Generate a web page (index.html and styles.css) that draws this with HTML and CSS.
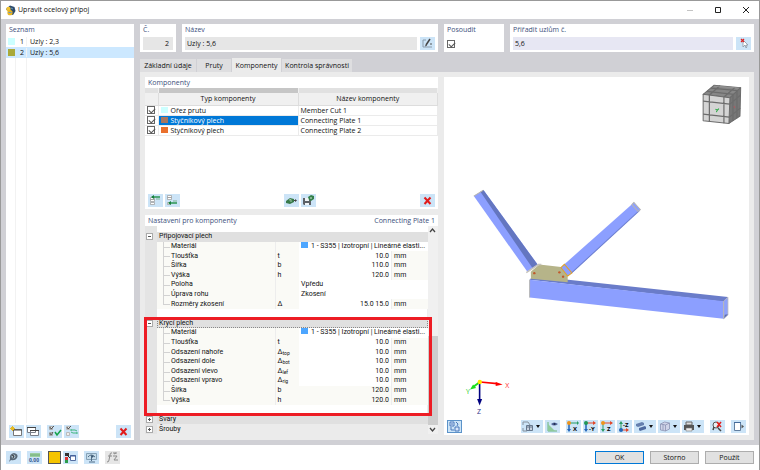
FILE: index.html
```html
<!DOCTYPE html>
<html lang="cs">
<head>
  <meta charset="UTF-8">
  <title>Upravit ocelový přípoj</title>
  <link rel="stylesheet" href="styles.css">
</head>
<body>
<div class="window">
  <header class="titlebar">
    <svg class="app-icon" width="11" height="11" viewBox="0 0 11 11">
      <path d="M1 4 5 .5 9.500 2 10.500 6 8 10 5 9z" fill="#2c4b6b"/>
      <circle cx="3.500" cy="4" r="2.200" fill="#f2c230"/>
      <circle cx="5" cy="7.700" r="2.600" fill="#e9b520"/>
      <path d="M3.500 7.500h3M6 3l2 1" stroke="#6c99be" fill="none"/>
    </svg>
    <h1>Upravit ocelový přípoj</h1>
    <div class="caption-buttons">
      <button aria-label="Minimalizovat" disabled><svg width="8" height="8" viewBox="0 0 8 8"><path d="M1 4.500h6" stroke="#c4c4c4"/></svg></button>
      <button aria-label="Maximalizovat"><svg width="8" height="8" viewBox="0 0 8 8"><path d="M1.500 1.500h5v5h-5z" stroke="#222" fill="none"/></svg></button>
      <button aria-label="Zavřít"><svg width="8" height="8" viewBox="0 0 8 8"><path d="m1 1 6 6m0-6-6 6" stroke="#222"/></svg></button>
    </div>
  </header>

  <main class="content">
    <aside class="panel sidebar">
      <h2>Seznam</h2>
      <ul class="list">
        <li><i class="swatch cyan"></i><span class="num">1</span><span>Uzly : 2,3</span></li>
        <li class="selected"><i class="swatch olive"></i><span class="num">2</span><span>Uzly : 5,6</span></li>
        <li class="rest"><span class="num"></span></li>
      </ul>
      <div class="toolbar">
        <button class="tool" aria-label="Nový"><svg viewBox="0 0 15 13"><path d="M4.500 4.500h8v6h-8z" fill="#fff" stroke="#777"/><path d="M4 5h9" stroke="#444"/><path d="M3.500 1v5M1 3.500h5M2 2l3 3m0-3L2 5" stroke="#e6ba25"/></svg></button>
        <button class="tool" aria-label="Kopírovat"><svg viewBox="0 0 15 13"><path d="M1.500 2.500h8v5h-8zM4.500 5.500h8v5h-8z" fill="#fff" stroke="#787e88"/><path d="M1 2.500h9M4 5.500h9" stroke="#444"/></svg></button>
        <span class="gap"></span>
        <button class="tool" aria-label="Vybrat vše"><svg viewBox="0 0 15 13"><path d="M2.500 1.500h3v3h-3zM2.500 7.500h3v3h-3z" fill="#eee" stroke="#aaa"/><path d="m3 2 1 2 3-3M3 8l1 2 2-3" stroke="#555" fill="none"/><path d="m8 7 2 3 4-5" stroke="#14a34c" stroke-width="1.500" fill="none"/></svg></button>
        <button class="tool" aria-label="Obrátit výběr"><svg viewBox="0 0 15 13"><path d="M2.500 1.500h3v3h-3zM2.500 7.500h3v3h-3z" fill="#eee" stroke="#bbb"/><path d="m3 2 1 2 3-3" stroke="#555" fill="none"/><path d="M7 5h4l2 1M7 4v2M13 8H9L7 7m6 0v2" stroke="#42b783" fill="none"/></svg></button>
        <button class="tool push" aria-label="Smazat"><svg viewBox="0 0 15 13"><path d="m4.500 3.500 6 6.500m0-6.500-6 6.500" stroke="#e11b1b" stroke-width="2"/></svg></button>
      </div>
    </aside>

    <div class="main">
      <div class="fields">
        <div class="fields-left">
          <div class="panel field number-field">
            <label for="number">Č.</label>
            <input id="number" class="text right" value="2" readonly>
          </div>
          <div class="panel field grow">
            <label for="name">Název</label>
            <div class="input-row">
              <input id="name" class="text" value="Uzly : 5,6" readonly>
              <button class="tool" aria-label="Upravit název"><svg viewBox="0 0 15 13"><path d="M6 3H3v7h9" stroke="#8a9bab" fill="none"/><path d="m6 8 4-6" stroke="#444" stroke-width="1.500"/><path d="m5 9 2-1M10 7h2" stroke="#555"/></svg></button>
            </div>
          </div>
        </div>
        <div class="panel field check-field">
          <label for="design">Posoudit</label>
          <div class="input-row"><input id="design" class="check" type="checkbox" checked></div>
        </div>
        <div class="panel field grow">
          <label for="nodes">Přiřadit uzlům č.</label>
          <div class="input-row">
            <input id="nodes" class="text lilac" value="5,6">
            <button class="tool" aria-label="Vybrat uzly"><svg viewBox="0 0 15 13"><path d="M7 3v7l2-2 1 3 1-1-1-2h2z" fill="#fff" stroke="#8b98a3" stroke-width=".8"/><path d="m5 2 3 3m0-3L5 5" stroke="#d22" stroke-width="1.200"/></svg></button>
          </div>
        </div>
      </div>

      <nav class="tabs" role="tablist">
        <button role="tab" class="tab tab-basic">Základní údaje</button>
        <button role="tab" class="tab tab-members">Pruty</button>
        <button role="tab" class="tab tab-components active" aria-selected="true">Komponenty</button>
        <button role="tab" class="tab tab-check">Kontrola správnosti</button>
      </nav>

      <div class="page">
        <div class="left">
          <section class="panel components">
            <h2>Komponenty</h2>
            <table class="component-table">
              <colgroup><col class="c-check"><col class="c-type"><col></colgroup>
              <thead>
                <tr class="strip"><td></td><td class="dark"></td><td></td></tr>
                <tr><th></th><th>Typ komponenty</th><th>Název komponenty</th></tr>
              </thead>
              <tbody>
                <tr><td><input class="check" type="checkbox" aria-label="Ořez prutu" checked></td><td><i class="swatch cyan"></i>Ořez prutu</td><td>Member Cut 1</td></tr>
                <tr class="active"><td><input class="check" type="checkbox" aria-label="Styčníkový plech 1" checked></td><td><i class="swatch brown"></i>Styčníkový plech</td><td>Connecting Plate 1</td></tr>
                <tr><td><input class="check" type="checkbox" aria-label="Styčníkový plech 2" checked></td><td><i class="swatch orange"></i>Styčníkový plech</td><td>Connecting Plate 2</td></tr>
              </tbody>
            </table>
            <div class="toolbar">
              <button class="tool" aria-label="Vložit před"><svg viewBox="0 0 15 13"><path d="M2.500 3.500h4v2h-4zM2.500 5.500h4v2h-4zM2.500 8.500h4v2h-4z" fill="#fff" stroke="#999" stroke-width=".7"/><path d="M4 3h8" stroke="#299451" stroke-width="1.500"/><path d="m3 3 3-2v4z" fill="#16813d"/><path d="M8 5h4" stroke="#7db597"/></svg></button>
              <button class="tool" aria-label="Vložit za"><svg viewBox="0 0 15 13"><path d="M2.500 1.500h4v2h-4zM2.500 3.500h4v2h-4zM2.500 8.500h3v2h-3z" fill="#fff" stroke="#999" stroke-width=".7"/><path d="M4 9h8" stroke="#299451" stroke-width="1.500"/><path d="m3 9 3-2v4z" fill="#16813d"/><path d="M8 7h4" stroke="#7db597"/></svg></button>
              <button class="tool push-mid" aria-label="Načíst šablonu"><svg viewBox="0 0 15 13"><path d="m2 7 4-3 4 1v3l-4 2-4-1z" fill="#387a4a"/><path d="m5 6 2-.5V8" stroke="#a7c9ae" fill="none"/><path d="M10 6.500h2" stroke="#444"/><path d="m11 5 2 1.500L11 8z" fill="#444"/></svg></button>
              <button class="tool" aria-label="Uložit šablonu"><svg viewBox="0 0 15 13"><path d="M2 4h8v7H3L2 10z" fill="#5c6066"/><path d="M4 4h4v3H4zM4 9h4v2H4z" fill="#eef2f5"/><path d="m7 3 3-2 3 1v3l-3 2-2-1z" fill="#34804a"/><path d="M9 4h2" stroke="#d5e7d7"/></svg></button>
              <button class="tool push" aria-label="Smazat komponentu"><svg viewBox="0 0 15 13"><path d="m4.500 3.500 6 6.500m0-6.500-6 6.500" stroke="#e11b1b" stroke-width="2"/></svg></button>
            </div>
          </section>

          <section class="settings">
            <h2><span>Nastavení pro komponenty</span><span>Connecting Plate 1</span></h2>
            <div class="tree-box">
              <div class="tree-scroll">
                <table class="tree">
                  <colgroup><col class="t-gutter"><col class="t-name"><col class="t-symbol"><col><col class="t-unit"></colgroup>
                  <tbody>
                    <tr class="group"><td><i class="toggle"></i></td><th colspan="4">Připojovací plech</th></tr>
                    <tr><td></td><td>Materiál</td><td></td><td colspan="2"><i class="swatch blue"></i>1 - S355 | Izotropní | Lineárně elasti...</td></tr>
                    <tr><td></td><td>Tloušťka</td><td>t</td><td class="value">10.0</td><td>mm</td></tr>
                    <tr><td></td><td>Šířka</td><td>b</td><td class="value">110.0</td><td>mm</td></tr>
                    <tr><td></td><td>Výška</td><td>h</td><td class="value">120.0</td><td>mm</td></tr>
                    <tr><td></td><td>Poloha</td><td></td><td colspan="2">Vpředu</td></tr>
                    <tr><td></td><td>Úprava rohu</td><td></td><td colspan="2">Zkosení</td></tr>
                    <tr class="last"><td></td><td>Rozměry zkosení</td><td>Δ</td><td class="value">15.0 15.0</td><td>mm</td></tr>
                    <tr class="blank"><td></td><td colspan="4"></td></tr>
                    <tr class="group focused"><td><i class="toggle"></i></td><th colspan="4">Krycí plech</th></tr>
                    <tr><td></td><td>Materiál</td><td></td><td colspan="2"><i class="swatch blue"></i>1 - S355 | Izotropní | Lineárně elasti...</td></tr>
                    <tr><td></td><td>Tloušťka</td><td>t</td><td class="value">10.0</td><td>mm</td></tr>
                    <tr><td></td><td>Odsazení nahoře</td><td>Δ<small>top</small></td><td class="value">10.0</td><td>mm</td></tr>
                    <tr><td></td><td>Odsazení dole</td><td>Δ<small>bot</small></td><td class="value">10.0</td><td>mm</td></tr>
                    <tr><td></td><td>Odsazení vlevo</td><td>Δ<small>lef</small></td><td class="value">10.0</td><td>mm</td></tr>
                    <tr><td></td><td>Odsazení vpravo</td><td>Δ<small>rig</small></td><td class="value">10.0</td><td>mm</td></tr>
                    <tr class="locked"><td></td><td>Šířka</td><td>b</td><td class="value">120.0</td><td>mm</td></tr>
                    <tr class="locked last"><td></td><td>Výška</td><td>h</td><td class="value">120.0</td><td>mm</td></tr>
                    <tr class="blank"><td></td><td colspan="4"></td></tr>
                    <tr class="group"><td><i class="toggle closed"></i></td><th colspan="4">Svary</th></tr>
                    <tr class="group light"><td><i class="toggle closed"></i></td><th colspan="4">Šrouby</th></tr>
                  </tbody>
                </table>
              </div>
              <div class="scrollbar">
                <svg width="9" height="9" viewBox="0 0 9 9"><path d="m2 6 2.500-3L7 6" stroke="#444" stroke-width="1.300" fill="none"/></svg>
                <div class="thumb"></div>
                <svg width="9" height="9" viewBox="0 0 9 9"><path d="m2 3 2.500 3L7 3" stroke="#444" stroke-width="1.300" fill="none"/></svg>
              </div>
            </div>
            <div class="highlight"></div>
          </section>
        </div>

        <section class="view">
          <svg class="scene" viewBox="444 77 304 340">
            <!-- bottom beam -->
            <path d="M529.300 279 531 277 568 279 727 296.300 722.700 301z" fill="#6a7cc9"/>
            <path d="M722.700 300.500 727 296.500V314.300L722.700 318z" fill="#8ea2fb" stroke="#b5b5bd" stroke-width=".8"/>
            <path d="m723 317.500 4-4-3 .5z" fill="#5e6da8"/>
            <path d="M529.300 279 722.700 300.500V318L529.300 296.700z" fill="#8c9fff"/>
            <path d="M529.300 279V296.700M722.700 300.500V318" stroke="#b8b8b8"/>
            <!-- left brace -->
            <path d="M473.700 195.700 483.300 189.700 537.300 264 527.300 271.300z" fill="#8c9fff"/>
            <path d="M480.300 191.500 483.300 189.700 537.300 264 532.300 267.700z" fill="#6476c0"/>
            <path d="m473.700 195.700 9.600-6" stroke="#b9b6ad"/>
            <!-- plate -->
            <path d="M530.500 271 539 264 560.700 266.500 567.300 275V281.500L530.700 278z" fill="#b6b489"/>
            <path d="m526 272 12-8h3" stroke="#c5c3bd" stroke-width="1.500" fill="none"/>
            <!-- right brace -->
            <path d="M564 263.700 633.300 202 639.700 209.300 570.500 273.300z" fill="#8c9fff"/>
            <path d="m639 210-67.500 62" stroke="#6d7fd0"/>
            <path d="m633.300 202-2 2 6 7 2.400-1.700z" fill="#8c9fff" stroke="#b5b5b5"/>
            <path d="m560.500 267 3.500-3.300 7.500 8.600-4.200 3z" fill="#8c9fff" stroke="#dfa22b"/>
            <g fill="#c1582b"><circle cx="534" cy="272.500" r="1.200"/><circle cx="559" cy="271.700" r="1.200"/><circle cx="562.700" cy="276" r="1.200"/></g>
            <!-- axes -->
            <g class="axis-labels">
              <path d="m480 381 17 1.600" stroke="#f00" stroke-width="1.600"/><path d="m502.500 383.500-7-2.500v4z" fill="#f00"/>
              <path d="m479.700 381-6 4.500" stroke="#1de01d" stroke-width="2"/><path d="m470 388.500 3-5 3 3.500z" fill="#1de01d"/>
              <path d="M479.500 381v18" stroke="#000080" stroke-width="1.600"/><path d="m479.500 404.500-2.500-6.500h5z" fill="#000080"/>
              <circle cx="479.700" cy="381" r="2.200" fill="#ffe800"/>
              <text x="505" y="387" fill="#f33">X</text><text x="466" y="393" fill="#2c2">Y</text><text x="477" y="413" fill="#338">Z</text>
            </g>
            <!-- view cube -->
            <g stroke="#6c6c6c" stroke-linejoin="round">
              <path d="M702.300 94.300 713 85.300 739.700 87.700 729 97.700z" fill="#878787"/>
              <path d="M729 97.700 739.700 87.700 739 116 728 123.300z" fill="#777"/>
              <path d="M702.300 94.300 729 97.700 728 123.300 702.300 120.700z" fill="#d4d4d4"/>
              <path d="m708.500 95 0 26.500M723 97v26M702.300 101l26.500 3M702.300 114l26 3M708.500 95l10.500-9.300M723 97l11-9.500M706 91.300l27 3M710 88l27 2.500M732 95v25.700M736 91v27M729 104l10.700-9M728.500 117l10.800-9" stroke-width="1.200" fill="none"/>
              <path d="m713 86 25 2" stroke="#aaa" stroke-width=".5"/>
            </g>
            <path d="m714.500 109 2 1 1.500-1.500m-1.500 1.500-1 2" stroke="#22a63c" fill="none"/>
            <path d="m733 106 1 2" stroke="#ad595f"/>
          </svg>
          <div class="toolbar">
            <button class="tool pressed" aria-label="Synchronizovat"><svg viewBox="0 0 15 13"><path d="M3 2h4v4H3zM8 7h4v4H8z" fill="#d7e5fa" stroke="#4978bb"/><path d="M4 7v3h3M9 2l2 2-1 2M5 3v2" stroke="#4978bb" fill="none"/></svg></button>
            <button class="tool wide push" aria-label="Zobrazení"><svg viewBox="0 0 15 13"><path d="M2 5V2h5l2 3M2 8v3h4" stroke="#87929d" fill="none"/><path d="M5.500 5.500h6v5h-6z" fill="#c9d3e0" stroke="#67788d"/><path d="M6 7h5M8.500 6v4" stroke="#67788d"/></svg><i class="arrow"></i></button>
            <button class="tool" aria-label="Měřit"><svg viewBox="0 0 15 13"><path d="M3 2v9h9" stroke="#6cb57c" fill="none"/><path d="m3 4 7 7H3z" fill="#8fca9b"/><path d="M6 4q3-3 7 0-4 3-7 0" fill="#536799"/><circle cx="9.500" cy="4" r="1" fill="#202b50"/></svg></button>
            <span class="gap"></span>
            <button class="tool axis" aria-label="Pohled X"><svg viewBox="0 0 15 13"><path d="M3 3h9" stroke="#299b65"/><path d="m11 1 2 2-2 2z" fill="#299b65"/><path d="M3 3v7" stroke="#2466b8" stroke-width="1.500"/><path d="m1 9 2 3 2-3z" fill="#2466b8"/><circle cx="3" cy="3" r="2" fill="#ee941d"/><text x="7" y="11">X</text></svg></button>
            <button class="tool axis" aria-label="Pohled -Y"><svg viewBox="0 0 15 13"><path d="M3 3h9" stroke="#e2482c"/><path d="m10 1 3 2-3 2z" fill="#e2482c"/><path d="M3 3v7" stroke="#2466b8" stroke-width="1.500"/><path d="m1 9 2 3 2-3z" fill="#2466b8"/><circle cx="3" cy="3" r="2" fill="#219757"/><text x="6" y="11">-Y</text></svg></button>
            <button class="tool axis" aria-label="Pohled Z"><svg viewBox="0 0 15 13"><path d="M3 3h9" stroke="#e2482c"/><path d="m10 1 3 2-3 2z" fill="#e2482c"/><path d="M3 3v7" stroke="#299b65"/><path d="m1 9 2 3 2-3z" fill="#299b65"/><circle cx="3" cy="3" r="2" fill="#ee941d"/><text x="7" y="11">Z</text></svg></button>
            <button class="tool axis" aria-label="Pohled -Z"><svg viewBox="0 0 15 13"><path d="M4 10V3" stroke="#299b65"/><path d="m2 4 2-3 2 3z" fill="#299b65"/><path d="M4 10h7" stroke="#e2482c"/><path d="m9 8 3 2-3 2z" fill="#e2482c"/><circle cx="4" cy="10" r="2" fill="#2466b8"/><text x="6" y="7">-Z</text></svg></button>
            <button class="tool wide" aria-label="Vykreslení"><svg viewBox="0 0 15 13"><path d="m2 4 6-2 2 1v2L4 7 2 6z" fill="#657fae"/><path d="m5 8 6-2 1 1v2l-6 2-1-1z" fill="#4e6a9f"/></svg><i class="arrow"></i></button>
            <button class="tool wide" aria-label="Průhlednost"><svg viewBox="0 0 15 13"><path d="m2.500 4 4-2 5 1v6l-4 2-5-1zM2.500 4l5 1v6m0-6 4-2M5 4v6" fill="#d0d4e8" stroke="#8b93b3" stroke-width=".8"/></svg><i class="arrow"></i></button>
            <button class="tool wide" aria-label="Tisk"><svg viewBox="0 0 15 13"><path d="M4 2h6v3H4z" fill="#ddd" stroke="#666"/><path d="M2 5h10v5H2z" fill="#555"/><path d="M4 8h6v3H4z" fill="#eee" stroke="#777" stroke-width=".6"/></svg><i class="arrow"></i></button>
            <span class="gap"></span>
            <button class="tool" aria-label="Zrušit lupu"><svg viewBox="0 0 15 13"><circle cx="6" cy="5" r="3" fill="#e7eef4" stroke="#555"/><path d="m8 8 3 3M4 7l-1 3" stroke="#444" stroke-width="1.500"/><path d="m7 2 4 5m0-5L7 7" stroke="#e11b1b" stroke-width="1.500"/></svg></button>
            <span class="gap"></span>
            <button class="tool" aria-label="Skrýt panel"><svg viewBox="0 0 15 13"><path d="M3.500 2.500h6v8h-6z" fill="#fff" stroke="#627f9f"/><path d="M3 2.500h7" stroke="#446b9b"/><path d="m10.500 4.500 2.500 2-2.500 2z" fill="#555"/></svg></button>
          </div>
        </section>
      </div>
    </div>
  </main>

  <footer class="footer">
    <button class="tool" aria-label="Nápověda"><svg viewBox="0 0 15 13"><path d="m3 11 1-3q-1-5 4-6 5 1 3 5-2 3-6 2z" fill="#596876"/><circle cx="7.500" cy="5.500" r="2" fill="#a8bdcb"/><path d="m6 4 2 1-1 2" stroke="#333" fill="none"/></svg></button>
    <span class="gap"></span>
    <button class="tool" aria-label="Jednotky"><svg viewBox="0 0 15 13"><path d="M3 2h10v4H3z" fill="#9bcf9f"/><path d="M3 4h10" stroke="#6eaa7a"/><text class="units" x="2" y="11">0,00</text></svg></button>
    <span class="gap"></span>
    <button class="color" aria-label="Barva"></button>
    <button class="tool" aria-label="Vlastnosti"><svg viewBox="0 0 15 13"><path d="M2 2h4v3H2z" fill="#333"/><path d="M2 6h3v3H2z" fill="#d33"/><path d="M2 9h3v3H2z" fill="#2c9c4b"/><path d="m4 4 3 3" stroke="#222"/><path d="M7.500 4.500h5v5h-5z" fill="#fff" stroke="#536da0"/><path d="M7 5h6" stroke="#3d5b97"/></svg></button>
    <span class="gap"></span>
    <button class="tool" aria-label="Zobrazení modelu"><svg viewBox="0 0 15 13"><path d="M2.500 2.500h10v6h-10z" fill="#c4dbea" stroke="#86a2b7"/><path d="M4 6q3-4 7 0M5 11h6M7.500 5v5" stroke="#4f6c86" fill="none"/><path d="m7 4 3 1-2 2z" fill="#3b5872"/></svg></button>
    <span class="gap"></span>
    <button class="tool disabled" aria-label="Vzorec" disabled><svg viewBox="0 0 15 13"><path d="M7 2H6Q5 2 5 4L4 9q0 2-2 2M3 5h4M8 2h4M8 5h4L9 9h4M9 3l2-1" stroke="#8b8b8b" fill="none"/></svg></button>
    <div class="actions">
      <button class="action default">OK</button>
      <button class="action">Storno</button>
      <button class="action">Použít</button>
    </div>
  </footer>
</div>
</body>
</html>
```

FILE: styles.css
```css
* {
  box-sizing: border-box;
}

body {
  margin: 0;
  font: 7px/9px "Open Sans", "Noto Sans", sans-serif;
  color: #111;
}

button, input {
  font: inherit;
  color: inherit;
  margin: 0;
  padding: 0;
  border: 0;
}

h1, h2 {
  margin: 0;
  font-weight: 400;
}

h2, label {
  font-size: 7px;
  font-weight: 500;
  line-height: 9px;
  color: #3c4f7c;
}

svg {
  display: block;
}

.window {
  display: flex;
  flex-direction: column;
  min-height: 100vh;
  background: #d0d0d5;
  border: 1px solid #999;
}

/* title bar */
.titlebar {
  display: flex;
  align-items: center;
  height: 18px;
  padding: 0 9px 0 4px;
  background: #fff;
}

.titlebar h1 {
  margin-left: 2px;
  font-size: 7px;
  line-height: 12px;
}

.caption-buttons {
  display: flex;
  gap: 20px;
  margin-left: auto;
}

.caption-buttons button {
  background: none;
}

/* frame */
.content {
  display: flex;
  flex: 1;
  gap: 6px;
  padding: 5px;
}

.panel {
  background: #fff;
}

.sidebar {
  display: flex;
  flex-direction: column;
  width: 128px;
}

.sidebar h2 {
  padding: 1px 3px 2px;
}

.list {
  display: flex;
  flex: 1;
  flex-direction: column;
  margin: 0;
  padding: 0;
  list-style: none;
}

.list li {
  display: flex;
  align-items: center;
  height: 11px;
  padding-left: 2px;
}

.list li.rest {
  flex: 1;
  align-items: stretch;
  padding-left: 9px;
}

.list .selected {
  background: #cce8ff;
}

.list .num {
  width: 12px;
  margin-right: 3px;
  padding-right: 2px;
  text-align: right;
  border-right: 1px solid #f2f2f2;
}

.list .rest .num {
  border-left: 1px solid #f2f2f2;
}

.swatch {
  display: inline-block;
  width: 7px;
  height: 7px;
}

.cyan { background: #ccffff; }
.olive { background: #a9a93a; }
.brown { background: #a87660; }
.orange { background: #ea702d; }
.blue { background: #4da6ff; }

.toolbar {
  display: flex;
  gap: 2px;
  padding: 2px 3px;
}

.tool {
  flex: none;
  display: flex;
  align-items: center;
  width: 15px;
  height: 13px;
  background: #cce4f7;
}

.tool svg {
  width: 15px;
  height: 13px;
}

.tool.wide {
  width: 22px;
}

.tool.pressed {
  outline: 1px solid #5c93c9;
  outline-offset: -1px;
}

.tool.disabled {
  background: #e6e6e6;
}

.arrow {
  border: 2px solid transparent;
  border-top: 3px solid #111;
  border-bottom: 0;
}

.gap {
  width: 2px;
}

.push {
  margin-left: auto;
}

.push-mid {
  margin-left: 102px;
}

.main {
  flex: 1;
  display: flex;
  flex-direction: column;
  min-width: 0;
}

/* header fields */
.fields, .fields-left {
  display: flex;
  gap: 6px;
}

.fields-left {
  width: 298px;
}

.field {
  height: 28px;
  padding: 1px 3px 2px;
}

.field label {
  display: block;
  margin-bottom: 3px;
}

.grow {
  flex: 1;
  min-width: 0;
}

.number-field {
  width: 36px;
}

.check-field {
  width: 60px;
}

.input-row {
  display: flex;
  align-items: center;
  gap: 3px;
  height: 13px;
}

.text {
  width: 100%;
  min-width: 0;
  height: 13px;
  padding: 0 2px;
  background: #e6e6e6;
}

.text.right {
  padding-right: 4px;
  text-align: right;
}

.text.lilac {
  background: #e7e7f3;
}

.check {
  display: block;
  appearance: none;
  width: 8px;
  height: 8px;
  background: #fff;
  border: 1px solid #666;
}

.check:checked::before {
  content: "";
  display: block;
  width: 5px;
  height: 3px;
  margin: 1px;
  border: solid #555;
  border-width: 0 0 1px 1px;
  transform: rotate(-45deg);
}

/* tabs */
.tabs {
  display: flex;
  align-items: flex-end;
  height: 20px;
}

.tab {
  height: 13px;
  background: #dedee0;
  border-right: 1px solid #d0d0d5;
}

.tab-basic { width: 57px; }
.tab-members { width: 35px; }
.tab-components { width: 50px; }
.tab-check { width: 71px; }

.tab.active {
  height: 14px;
  background: #ebebeb;
}

.page {
  flex: 1;
  display: flex;
  gap: 6px;
  padding: 5px;
  background: #ebebeb;
}

.left {
  display: flex;
  flex-direction: column;
  gap: 6px;
  width: 293px;
}

/* component table */
.components {
  display: flex;
  flex-direction: column;
  height: 132px;
}

.components h2 {
  padding: 1px 3px;
}

.components .toolbar {
  margin-top: auto;
}

table {
  width: 100%;
  table-layout: fixed;
  border-collapse: collapse;
}

td, th {
  padding: 0;
  font-weight: 400;
  line-height: 9px;
  white-space: nowrap;
}

.c-check { width: 13px; }
.c-type { width: 140px; }

.component-table .strip td {
  height: 5px;
  background: #e1e1e1;
  border-right: 1px solid #f0f0f0;
}

.component-table .strip .dark {
  background: #c6c6c6;
}

.component-table th {
  height: 12px;
  background: #f0f0f0;
  border: solid #ddd;
  border-width: 0 1px 1px 0;
}

.component-table tbody td {
  height: 10px;
  padding-left: 2px;
  border: solid #ebebeb;
  border-width: 0 1px 1px 0;
}

.component-table .swatch {
  height: 6px;
  margin-right: 3px;
}

.component-table .active td:nth-child(2) {
  color: #fff;
  background: #0078d7;
}

/* property tree */
.settings {
  position: relative;
  flex: 1;
}

.settings h2 {
  display: flex;
  justify-content: space-between;
  height: 11px;
  padding: 1px 3px;
  background: #fff;
}

.tree-box {
  display: flex;
}

.tree-scroll {
  flex: 1;
  min-width: 0;
  padding-top: 6px;
  background: linear-gradient(90deg, #e4e4e4 12px, #fff 12px);
}

.tree {
  height: 202px;
  font-family: Roboto, "Open Sans", sans-serif;
}

.tree tr {
  height: 9px;
}

.t-gutter { width: 12px; }
.t-name { width: 118px; }
.t-symbol { width: 24px; }
.t-unit { width: 36px; }

.tree td {
  padding-left: 2px;
}

.tree td:first-child {
  background: #e4e4e4;
}

.tree td:nth-child(2) {
  position: relative;
  padding-left: 14px;
  background: #fafaf6;
  border-right: 1px solid #ededed;
}

.tree td:nth-child(2)::before {
  content: "";
  position: absolute;
  top: 0;
  left: 6px;
  width: 6px;
  height: 5px;
  border: solid #d2d2d2;
  border-width: 0 0 1px 1px;
}

.tree tr:not(.last) td:nth-child(2)::after {
  content: "";
  position: absolute;
  top: 5px;
  bottom: 0;
  left: 6px;
  border-left: 1px solid #d2d2d2;
}

.tree td:nth-child(3) {
  background: #fafaf6;
}

.tree .value {
  padding-right: 2px;
  text-align: right;
}

.tree td:nth-child(5) {
  background: #fafaf6;
  border-left: 1px solid #ededed;
}

.tree .locked td:nth-child(4) {
  background: #fafaf6;
}

.tree .blank td:nth-child(2) {
  background: #fff;
}

.tree .blank td:nth-child(2)::before,
.tree .blank td:nth-child(2)::after {
  display: none;
}

.tree th {
  padding-left: 2px;
  text-align: left;
  background: #e0e0e0;
}

.tree .light th {
  background: #ebebeb;
}

.tree .focused th {
  outline: 1px dotted #888;
  outline-offset: -1px;
}

.tree small {
  font-size: 5px;
  line-height: 5px;
  vertical-align: -1px;
}

.tree .swatch {
  height: 6px;
  margin-right: 3px;
}

.toggle {
  display: block;
  width: 5px;
  height: 5px;
  background: linear-gradient(#555, #555) center / 3px 1px no-repeat #fff;
  outline: 1px solid #aaa;
  outline-offset: 0;
}

.toggle.closed {
  background: linear-gradient(#555, #555) center / 3px 1px no-repeat, linear-gradient(#555, #555) center / 1px 3px no-repeat #fff;
}

.scrollbar {
  display: flex;
  flex-direction: column;
  justify-content: space-between;
  width: 10px;
  background: #f0f0f0;
}

.thumb {
  height: 89px;
  margin-top: auto;
  background: #cdcdcd;
}

/* red frame laid over the tree */
.highlight {
  position: absolute;
  top: 102px;
  right: 6px;
  left: -1px;
  height: 99px;
  border: 3px solid #ed1c24;
}

/* 3D view */
.view {
  flex: 1;
  display: flex;
  flex-direction: column;
  background: #fff;
}

.scene {
  flex: 1;
  width: 100%;
  min-height: 0;
}

.axis-labels {
  font-size: 7px;
}

.axis text {
  font-size: 6px;
  font-weight: 700;
}

.units {
  font-size: 5px;
  font-weight: 700;
  fill: #38598f;
}

/* footer */
.footer {
  display: flex;
  align-items: center;
  gap: 2px;
  height: 25px;
  padding: 0 5px;
  background: #fff;
}

.color {
  width: 13px;
  height: 13px;
  background: #f5c400;
  border: 1px solid #555;
}

.actions {
  display: flex;
  gap: 6px;
  margin-left: auto;
}

.action {
  width: 49px;
  height: 13px;
  background: #e1e1e1;
  border: 1px solid #adadad;
}

.action.default {
  border-color: #0078d7;
}
```
